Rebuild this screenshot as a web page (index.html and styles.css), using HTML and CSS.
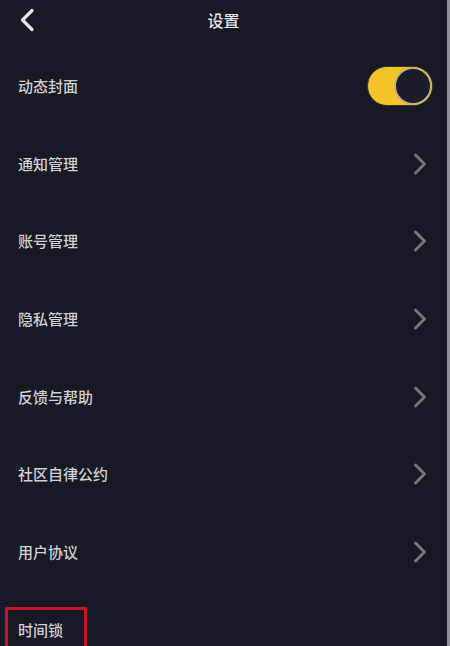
FILE: index.html
```html
<!DOCTYPE html>
<html lang="zh">
<head>
<meta charset="utf-8">
<title>设置</title>
<link rel="stylesheet" href="styles.css">
</head>
<body>
<div class="app">
  <header class="header">
    <svg class="back" width="16" height="24" viewBox="0 0 16 24"><polyline points="13,2.5 3.5,12 13,21.5" fill="none" stroke="#e6e6ea" stroke-width="3.2" stroke-linecap="round" stroke-linejoin="round"/></svg>
    <div class="title">设置</div>
  </header>
  <main class="list">
    <div class="row">
      <span class="label">动态封面</span>
      <span class="toggle"><span class="knob"></span></span>
    </div>
    <div class="row">
      <span class="label">通知管理</span>
      <svg class="chev" width="14" height="24" viewBox="0 0 14 24"><polyline points="2.5,3 11.5,12 2.5,21" fill="none" stroke="#74757f" stroke-width="3" stroke-linecap="round" stroke-linejoin="round"/></svg>
    </div>
    <div class="row">
      <span class="label">账号管理</span>
      <svg class="chev" width="14" height="24" viewBox="0 0 14 24"><polyline points="2.5,3 11.5,12 2.5,21" fill="none" stroke="#74757f" stroke-width="3" stroke-linecap="round" stroke-linejoin="round"/></svg>
    </div>
    <div class="row">
      <span class="label">隐私管理</span>
      <svg class="chev" width="14" height="24" viewBox="0 0 14 24"><polyline points="2.5,3 11.5,12 2.5,21" fill="none" stroke="#74757f" stroke-width="3" stroke-linecap="round" stroke-linejoin="round"/></svg>
    </div>
    <div class="row">
      <span class="label">反馈与帮助</span>
      <svg class="chev" width="14" height="24" viewBox="0 0 14 24"><polyline points="2.5,3 11.5,12 2.5,21" fill="none" stroke="#74757f" stroke-width="3" stroke-linecap="round" stroke-linejoin="round"/></svg>
    </div>
    <div class="row">
      <span class="label">社区自律公约</span>
      <svg class="chev" width="14" height="24" viewBox="0 0 14 24"><polyline points="2.5,3 11.5,12 2.5,21" fill="none" stroke="#74757f" stroke-width="3" stroke-linecap="round" stroke-linejoin="round"/></svg>
    </div>
    <div class="row">
      <span class="label">用户协议</span>
      <svg class="chev" width="14" height="24" viewBox="0 0 14 24"><polyline points="2.5,3 11.5,12 2.5,21" fill="none" stroke="#74757f" stroke-width="3" stroke-linecap="round" stroke-linejoin="round"/></svg>
    </div>
    <div class="row">
      <span class="label marked">时间锁</span>
    </div>
  </main>
</div>
</body>
</html>
```
FILE: styles.css
```css
html, body {
  margin: 0;
  padding: 0;
  background: #171924;
}
body {
  width: 450px;
  height: 646px;
  overflow: hidden;
  font-family: "Noto Sans CJK SC", "Noto Sans", sans-serif;
}
.app {
  width: 450px;
  height: 646px;
  box-sizing: border-box;
  border-right: 3px solid #8f9097;
  background: #171924;
  overflow: hidden;
}
.header {
  height: 40px;
  display: flex;
  align-items: center;
  position: relative;
  padding-left: 19px;
}
.back {
  display: block;
}
.title {
  position: absolute;
  left: 0;
  right: 0;
  top: 0;
  height: 40px;
  line-height: 40px;
  text-align: center;
  font-size: 16px;
  font-weight: 500;
  color: #e4e4e8;
  pointer-events: none;
}
.list {
  padding-top: 7px;
}
.row {
  height: 77.7px;
  display: flex;
  align-items: center;
  justify-content: space-between;
  padding: 0 14px 0 18px;
}
.label {
  font-size: 15px;
  line-height: 20px;
  font-weight: 500;
  color: #cfcfd4;
}
.chev {
  display: block;
  margin-right: 6px;
}
.toggle {
  width: 66px;
  height: 40px;
  border-radius: 20px;
  background: #f3c42a;
  box-sizing: border-box;
  border: 1px solid #3a3524;
  display: flex;
  align-items: center;
  justify-content: flex-end;
}
.knob {
  width: 38px;
  height: 38px;
  border-radius: 50%;
  box-sizing: border-box;
  background: #1c1d29;
  border: 2px solid #c4b27c;
}
.marked {
  display: inline-block;
  margin-left: -13px;
  padding: 10px 21px 10px 10px;
  border: 3px solid #c8132d;
}
```
